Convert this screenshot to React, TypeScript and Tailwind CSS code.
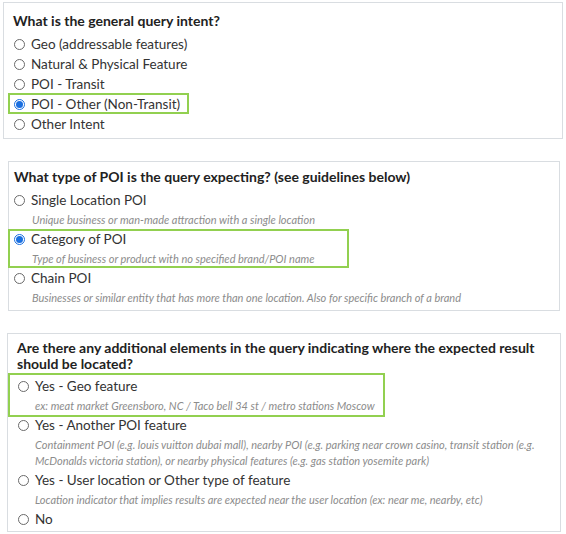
import React from 'react';

type Opt = { label: string; desc?: string[]; checked?: boolean };

const font = { fontFamily: 'Lato, "Open Sans", sans-serif' };

function Radio({ checked }: { checked?: boolean }) {
  if (checked) {
    return (
      <span className="flex h-[11px] w-[11px] shrink-0 items-center justify-center rounded-full border border-[#1a6fe0] bg-white">
        <span className="h-[7px] w-[7px] rounded-full bg-[#1a6fe0]" />
      </span>
    );
  }
  return <span className="h-[11px] w-[11px] shrink-0 rounded-full border border-[#6a6a6a] bg-white" />;
}

function Option({ opt, indent }: { opt: Opt; indent: string }) {
  return (
    <div>
      <div className={`flex h-[20px] items-center ${indent}`}>
        <Radio checked={opt.checked} />
        <span className="ml-[6px] text-[13.5px] text-[#333]">{opt.label}</span>
      </div>
      {opt.desc && (
        <div className="pb-[1px] pl-[18px] pt-[2px] text-[11px] italic leading-[16px] text-[#8c8c8c]">
          {opt.desc.map((d) => (
            <div key={d}>{d}</div>
          ))}
        </div>
      )}
    </div>
  );
}

const q1: Opt[] = [
  { label: 'Geo (addressable features)' },
  { label: 'Natural & Physical Feature' },
  { label: 'POI - Transit' },
  { label: 'POI - Other (Non-Transit)', checked: true },
  { label: 'Other Intent' },
];

const q2: Opt[] = [
  { label: 'Single Location POI', desc: ['Unique business or man-made attraction with a single location'] },
  { label: 'Category of POI', checked: true, desc: ['Type of business or product with no specified brand/POI name'] },
  {
    label: 'Chain POI',
    desc: ['Businesses or similar entity that has more than one location. Also for specific branch of a brand'],
  },
];

const q3: Opt[] = [
  { label: 'Yes - Geo feature', desc: ['ex: meat market Greensboro, NC / Taco bell 34 st / metro stations Moscow'] },
  {
    label: 'Yes - Another POI feature',
    desc: [
      'Containment POI (e.g. louis vuitton dubai mall), nearby POI (e.g. parking near crown casino, transit station (e.g.',
      'McDonalds victoria station), or nearby physical features (e.g. gas station yosemite park)',
    ],
  },
  {
    label: 'Yes - User location or Other type of feature',
    desc: ['Location indicator that implies results are expected near the user location (ex: near me, nearby, etc)'],
  },
  { label: 'No' },
];

function Mark({ className }: { className: string }) {
  return <div className={`pointer-events-none absolute border-2 border-[#92d050] ${className}`} />;
}

export default function App() {
  return (
    <div className="min-h-[534px] w-[566px] bg-white pt-[2px]" style={font}>
      <div className="relative ml-[3px] h-[137px] w-[560px] border border-[#d9dde1] pl-[9px] pt-[9px]">
        <div className="whitespace-nowrap text-[14px] font-bold leading-[18px] text-[#222]">
          What is the general query intent?
        </div>
        <div className="mt-[4px]">
          {q1.map((o) => (
            <Option key={o.label} opt={o} indent="pl-[1px]" />
          ))}
        </div>
        <Mark className="left-[4px] top-[90px] h-[21px] w-[181px]" />
      </div>

      <div className="relative ml-[8px] mt-[22px] h-[150px] w-[552px] border border-[#d9dde1] pl-[5px] pt-[6px]">
        <div className="whitespace-nowrap text-[14px] font-bold leading-[18px] text-[#222]">
          What type of POI is the query expecting? (see guidelines below)
        </div>
        <div className="mt-[4px]">
          {q2.map((o) => (
            <Option key={o.label} opt={o} indent="pl-[0px]" />
          ))}
        </div>
        <Mark className="left-[-1px] top-[67px] h-[39px] w-[341px]" />
      </div>

      <div className="relative ml-[7px] mt-[22px] h-[199px] w-[554px] border border-[#d9dde1] pl-[9px] pt-[6px]">
        <div className="whitespace-nowrap text-[14px] font-bold leading-[16px] text-[#222]">
          Are there any additional elements in the query indicating where the expected result
          <br />
          should be located?
        </div>
        <div className="mt-[4px]">
          {q3.map((o) => (
            <Option key={o.label} opt={o} indent="pl-[1px]" />
          ))}
        </div>
        <Mark className="left-[0px] top-[39px] h-[44px] w-[377px]" />
      </div>
    </div>
  );
}
